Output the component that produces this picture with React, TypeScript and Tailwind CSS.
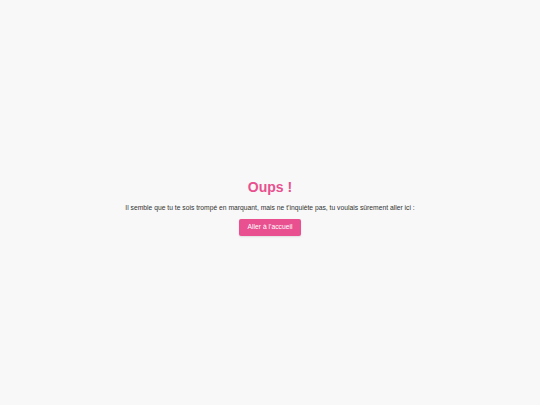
export default function App() {
  return (
    <div className="min-h-screen w-full bg-[#f8f8f8] flex flex-col items-center justify-center pt-[9px] font-['Liberation_Sans',Arial,sans-serif]">
      <h1 className="text-[14px] leading-[16px] font-bold text-[#e8508f]">Oups !</h1>
      <p className="mt-[9px] text-[6.75px] leading-[8px] text-[#333333]">
        Il semble que tu te sois trompé en marquant, mais ne t'inquiète pas, tu voulais sûrement aller ici :
      </p>
      <a
        href="#"
        className="mt-[7px] bg-[#e8508f] text-white text-[6.75px] leading-[8px] px-[8.5px] py-[4.5px] rounded-[2px] shadow-[0_1px_2px_rgba(0,0,0,0.1)]"
      >
        Aller à l'accueil
      </a>
    </div>
  );
}
